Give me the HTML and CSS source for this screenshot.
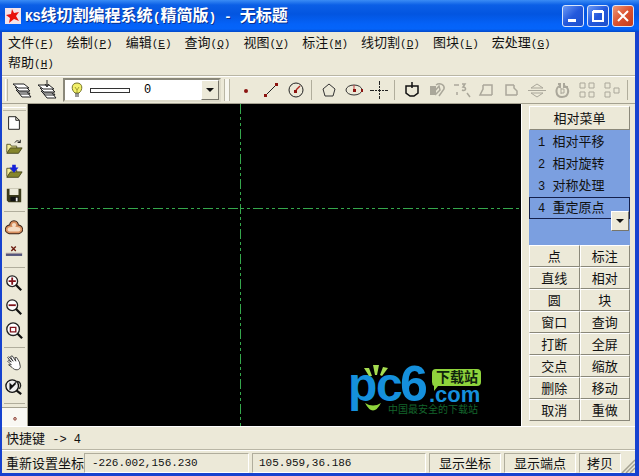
FILE: index.html
```
<!DOCTYPE html>
<html lang="zh">

<head>
    <meta charset="UTF-8">
    <meta name="viewport" content="width=device-width, initial-scale=1.0">
    <title>KS线切割编程系统(精简版) - 无标题</title>
    <link rel="stylesheet" href="styles.css">
</head>

<body>
    <div class="window">
        <!-- 标题栏 -->
        <header class="title-bar">
            <svg class="app-icon" viewBox="0 0 16 16">
                <rect width="16" height="16" fill="#f4e4ea" />
                <path d="M7 1l2 4 5-1-3 4 3 5-5-2-5 4 1-5-4-3 5-1z" fill="#e8120c" />
            </svg>
            <h1><span class="en">KS</span>线切割编程系统<span class="en">(</span>精简版<span class="en">) - </span>无标题</h1>
            <div class="window-buttons">
                <button class="window-button" aria-label="最小化">
                    <svg viewBox="0 0 20 20"><path d="M5 13h8v3H5z" fill="#fff" /></svg>
                </button>
                <button class="window-button" aria-label="最大化">
                    <svg viewBox="0 0 20 20"><path d="M5 6h10v9H5zM5 5h10" fill="none" stroke="#fff" stroke-width="2" /></svg>
                </button>
                <button class="window-button close" aria-label="关闭">
                    <svg viewBox="0 0 20 20"><path d="M5 5l10 10M15 5L5 15" stroke="#fff" stroke-width="2" /></svg>
                </button>
            </div>
        </header>

        <!-- 菜单 -->
        <nav class="menu-bar">
            <button>文件<span class="key">(<u>F</u>)</span></button>
            <button>绘制<span class="key">(<u>P</u>)</span></button>
            <button>编辑<span class="key">(<u>E</u>)</span></button>
            <button>查询<span class="key">(<u>Q</u>)</span></button>
            <button>视图<span class="key">(<u>V</u>)</span></button>
            <button>标注<span class="key">(<u>M</u>)</span></button>
            <button>线切割<span class="key">(<u>D</u>)</span></button>
            <button>图块<span class="key">(<u>L</u>)</span></button>
            <button>宏处理<span class="key">(<u>G</u>)</span></button>
            <button>帮助<span class="key">(<u>H</u>)</span></button>
        </nav>

        <!-- 工具栏 -->
        <div class="toolbar">
            <span class="grip"></span>
            <button class="tool" aria-label="图层">
                <svg viewBox="0 0 20 20" fill="#fff" stroke="#222">
                    <path d="M6 12h9l4 5h-9zM4 10h11l3 4H8z" /><path d="M3 7h11l4 4H7z" /><path d="M1 4h11l5 4H6z" />
                </svg>
            </button>
            <button class="tool" aria-label="当前图层">
                <svg viewBox="0 0 20 20" fill="#fff" stroke="#222">
                    <path d="M6 13h9l4 5h-9zM4 11h11l3 4H8z" /><path d="M3 8h11l4 4H7z" /><path d="M1 5h11l5 4H6z" />
                    <path d="M10 0v6M8 4l2 3 2-3" fill="none" />
                </svg>
            </button>
            <div class="layer-box">
                <svg class="bulb" viewBox="0 0 12 16">
                    <path d="M4 11C0 8 0 1 6 1s6 7 2 10z" fill="#f2f06a" stroke="#74742a" />
                    <path d="M4 12h4M4 14h4" stroke="#333" /><path d="M4 5l2 3 2-3M6 8v3" fill="none" stroke="#a0a030" />
                </svg>
                <span class="line-sample"></span>
                <select aria-label="图层选择">
                    <option>0</option>
                </select>
                <span class="arrow-box"></span>
            </div>
            <span class="grip double"></span>
            <button class="tool" aria-label="点">
                <svg viewBox="0 0 20 20"><circle cx="10" cy="11" r="2" fill="#8c1410" /></svg>
            </button>
            <button class="tool" aria-label="直线">
                <svg viewBox="0 0 20 20"><path d="M4 16L16 4" stroke="#222" /><path d="M3 14h3v3H3zM14 3h3v3h-3z" fill="#8c1410" /></svg>
            </button>
            <button class="tool" aria-label="圆">
                <svg viewBox="0 0 20 20"><circle cx="10" cy="10" r="7" fill="none" stroke="#222" /><path d="M10 10l4-4" stroke="#b02820" stroke-width="1.500" /><path d="M8 10h3v3H8z" fill="#8c1410" /></svg>
            </button>
            <span class="separator"></span>
            <button class="tool" aria-label="多边形">
                <svg viewBox="0 0 20 20"><path d="M10 4l6 5-2 7H6L4 9z" fill="none" stroke="#333" /></svg>
            </button>
            <button class="tool" aria-label="椭圆">
                <svg viewBox="0 0 20 20"><ellipse cx="10" cy="10" rx="8" ry="5" fill="none" stroke="#333" /><path d="M10 10V5" stroke="#c04040" /><path d="M9 9h3v3H9zM17 9h2v3h-2z" fill="#8c1410" /></svg>
            </button>
            <button class="tool" aria-label="辅助线">
                <svg viewBox="0 0 20 20"><path d="M1 10.500h18M10.500 1v18" stroke="#222" stroke-dasharray="4 1 2 1 3 1 2 1" /></svg>
            </button>
            <span class="separator"></span>
            <button class="tool" aria-label="轮廓">
                <svg viewBox="0 0 20 20"><path d="M10 6H4v7l4 3h4l4-3V6h-6M10 2v6" fill="none" stroke="#111" stroke-width="1.500" /></svg>
            </button>
            <button class="tool" aria-label="复制" disabled>
                <svg viewBox="0 0 20 20"><path d="M3 6h6v9H3z" fill="#aaa79a" /><path d="M7 12l5-6 1 4-5 5M9 5c4-3 9 0 8 4l-5 7" fill="none" stroke="#aaa79a" stroke-width="1.500" /></svg>
            </button>
            <button class="tool" aria-label="排序" disabled>
                <svg viewBox="0 0 20 20"><path d="M2 5h5M5 15v-3M15 13l3 4M10 4h3l-2 3c4 0 3 5-1 3" fill="none" stroke="#aaa79a" stroke-width="1.500" /></svg>
            </button>
            <button class="tool" aria-label="左轮廓" disabled>
                <svg viewBox="0 0 20 20"><path d="M6 5h9v10M6 5v4l-3 6h12" fill="none" stroke="#aaa79a" stroke-width="1.500" /></svg>
            </button>
            <button class="tool" aria-label="右轮廓" disabled>
                <svg viewBox="0 0 20 20"><path d="M12 5H4v10h11M12 5v3l3 3v4" fill="none" stroke="#aaa79a" stroke-width="1.500" /></svg>
            </button>
            <button class="tool" aria-label="镜像" disabled>
                <svg viewBox="0 0 20 20"><path d="M4 8l6-4 6 4zM4 13l6 4 6-4zM1 10.500h18" fill="none" stroke="#aaa79a" /></svg>
            </button>
            <button class="tool" aria-label="旋转" disabled>
                <svg viewBox="0 0 20 20"><path d="M8 6C3 7 3 17 10 17s8-8 3-11M8 3v5M12 3v4h4M6 4h3" fill="none" stroke="#aaa79a" stroke-width="2" /><path d="M9 8v6M9 9h3v4H9" fill="none" stroke="#aaa79a" /></svg>
            </button>
            <button class="tool" aria-label="阵列" disabled>
                <svg viewBox="0 0 20 20"><path d="M3 3h5v5H3zM12 3h5v5h-5zM3 12h5v5H3zM12 12h5v5h-5z" fill="none" stroke="#aaa79a" /></svg>
            </button>
            <button class="tool" aria-label="对齐" disabled>
                <svg viewBox="0 0 20 20"><path d="M3 3h5v5H3zM12 8h5v5h-5zM3 12h5v5H3z" fill="none" stroke="#aaa79a" /></svg>
            </button>
            <span class="separator"></span>
        </div>

        <main class="workspace">
            <div class="side-tools">
                <span class="side-grip"></span>
                <button class="tool" aria-label="新建">
                    <svg viewBox="0 0 20 20"><path d="M4 3h8l4 4v10H4zM12 3v4h4" fill="#fff" stroke="#111" /></svg>
                </button>
                <button class="tool" aria-label="打开">
                    <svg viewBox="0 0 20 20"><path d="M2 16V7h4l1 2h6v3" fill="#f3ec96" stroke="#55552a" /><path d="M2 17l4-6h13l-4 6z" fill="#85852c" stroke="#44441c" /><path d="M11 5c2-3 4-2 6 0M14 5h3V2" fill="none" stroke="#111" /></svg>
                </button>
                <button class="tool" aria-label="导入">
                    <svg viewBox="0 0 20 20"><path d="M2 16V7h4l1 2h6v3" fill="#f3ec96" stroke="#55552a" /><path d="M2 17l4-6h13l-4 6z" fill="#85852c" stroke="#44441c" /><path d="M8 3h4v3h3l-5 6-5-6h3z" fill="#1420d8" /></svg>
                </button>
                <button class="tool" aria-label="保存">
                    <svg viewBox="0 0 20 20"><path d="M2 3h16v15H4l-2-2z" fill="#3c3c1c" /><path d="M5 3h10v7H5z" fill="#eceada" /><path d="M6 12h9v5H6z" fill="#111" /><path d="M12 13h2v4h-2z" fill="#eee" /></svg>
                </button>
                <span class="side-separator"></span>
                <button class="tool" aria-label="加工轨迹">
                    <svg viewBox="0 0 20 20"><path d="M7 9c-2-6 8-6 6 0 6 0 7 6 2 7H5c-5-1-4-7 2-7z" fill="none" stroke="#3c2418" stroke-width="4" /><path d="M7 9c-2-6 8-6 6 0 6 0 7 6 2 7H5c-5-1-4-7 2-7z" fill="#f4dcc4" stroke="#d89060" stroke-width="2" /></svg>
                </button>
                <button class="tool" aria-label="清除轨迹">
                    <svg viewBox="0 0 20 20"><path d="M7 5l5 5M12 5l-5 5" stroke="#6c1c10" stroke-width="1.500" /><path d="M1 14h18" stroke="#55557c" stroke-width="3" /><path d="M1 12.500h18" stroke="#b0a0a0" /></svg>
                </button>
                <span class="side-separator"></span>
                <button class="tool" aria-label="放大">
                    <svg viewBox="0 0 20 20"><circle cx="8" cy="8" r="6" fill="#fff" stroke="#222" stroke-width="1.500" /><path d="M12 12l6 6" stroke="#111" stroke-width="2.500" /><path d="M4 8h8M8 4v8" stroke="#80141c" stroke-width="2" /></svg>
                </button>
                <button class="tool" aria-label="缩小">
                    <svg viewBox="0 0 20 20"><circle cx="8" cy="8" r="6" fill="#fff" stroke="#222" stroke-width="1.500" /><path d="M12 12l6 6" stroke="#111" stroke-width="2.500" /><path d="M4 8h8" stroke="#80141c" stroke-width="2" /></svg>
                </button>
                <button class="tool" aria-label="窗口缩放">
                    <svg viewBox="0 0 20 20"><circle cx="9" cy="8" r="7" fill="#fff" stroke="#222" stroke-width="1.500" /><path d="M14 13l5 5" stroke="#111" stroke-width="2.500" /><path d="M6 6h6v5H6z" fill="none" stroke="#80141c" stroke-width="1.500" /></svg>
                </button>
                <span class="side-separator"></span>
                <button class="tool" aria-label="平移">
                    <svg viewBox="0 0 20 20"><path d="M7 12L3 8l1-1 3 2-4-5 1-1 5 5-3-5 2-1 4 6-1-4 2 0 3 5 1 5c0 4-6 5-9 1l-4-3z" fill="#fff" stroke="#333" /></svg>
                </button>
                <button class="tool" aria-label="全图">
                    <svg viewBox="0 0 20 20"><circle cx="8" cy="9" r="7" fill="#eee" stroke="#111" stroke-width="1.500" /><path d="M13 14l5 4" stroke="#111" stroke-width="2.500" /><path d="M5 5v9l7-7V4L8 8z" fill="#111" /><path d="M12 4c5-1 7 4 4 8" fill="none" stroke="#222" stroke-width="1.500" /></svg>
                </button>
                <span class="side-separator"></span>
                <button class="tool pressed" aria-label="捕捉点">
                    <svg viewBox="0 0 20 20"><circle cx="10" cy="12" r="1.500" fill="#d8b0a8" stroke="#8c4438" /></svg>
                </button>
            </div>

            <!-- 绘图区 -->
            <div class="drawing">
                <svg class="axes">
                    <line x1="0" y1="32.500%" x2="100%" y2="32.500%" />
                    <line x1="43.100%" y1="0" x2="43.100%" y2="100%" />
                </svg>
                <svg class="watermark" viewBox="0 0 140 60" role="img" aria-label="pc6下载站">
                    <g class="brand">
                        <text x="-1" y="41" font-size="48">p</text>
                        <text x="27" y="41" font-size="48">c</text>
                        <text x="51" y="41" font-size="50">6</text>
                        <text x="80" y="42" font-size="22">.com</text>
                    </g>
                    <path d="M15 8l5 0 3 8-3 0zM24 5h6l-2 10h-2zM34 7l5 1-6 8-2-1z" fill="#a5dc50" />
                    <path d="M16 43q8 5 16 0q-8 15-16 0z" fill="#8fd43c" />
                    <path d="M87 9h41q4 0 4 4v9q0 4-4 4H89l-4 5v-5q-2-1-2-4v-9q0-4 4-4z" fill="#8fd43c" />
                    <text class="bubble-text" x="87" y="22">下载站</text>
                    <text class="slogan" x="39" y="53">中国最安全的下载站</text>
                </svg>
            </div>

            <aside class="side-menu">
                <button class="menu-title">相对菜单</button>
                <div class="menu-list">
                    <button><span class="en">1 </span>相对平移</button>
                    <button><span class="en">2 </span>相对旋转</button>
                    <button><span class="en">3 </span>对称处理</button>
                    <button class="active"><span class="en">4 </span>重定原点</button>
                    <button class="arrow-box more" aria-label="更多"></button>
                </div>
                <div class="command-grid">
                    <button>点</button><button>标注</button>
                    <button>直线</button><button>相对</button>
                    <button>圆</button><button>块</button>
                    <button>窗口</button><button>查询</button>
                    <button>打断</button><button>全屏</button>
                    <button>交点</button><button>缩放</button>
                    <button>删除</button><button>移动</button>
                    <button>取消</button><button>重做</button>
                </div>
            </aside>
        </main>

        <div class="command-line">快捷键<span class="en"> -&gt; 4</span></div>

        <!-- 状态栏 -->
        <footer class="status-bar">
            <span class="status-label">重新设置坐标</span>
            <span class="status-cell position en">-226.002,156.230</span>
            <span class="status-cell wide en">105.959,36.186</span>
            <span class="status-cell">显示坐标</span>
            <span class="status-cell">显示端点</span>
            <span class="status-cell small">拷贝</span>
            <svg class="resize" viewBox="0 0 14 14"><path d="M1 14L14 1M5 14l9-9M9 14l5-5" stroke="#a5a291" stroke-width="1.500" /></svg>
        </footer>
    </div>
</body>

</html>
```

FILE: styles.css
```
* {
    margin: 0;
    padding: 0;
    box-sizing: border-box;
}

body {
    font-family: 'Noto Sans CJK SC', sans-serif;
    font-size: 13px;
    line-height: 20px;
    color: #111;
    background: #ece9d8;
}

button {
    font: inherit;
    color: inherit;
    background: none;
    border: none;
}

.en,
.key {
    font-family: 'Liberation Mono', monospace;
    font-size: 11px;
    white-space: pre;
}

.window {
    min-height: 100vh;
    display: flex;
    flex-direction: column;
    background: #ece9d8;
    border: solid #1642cf;
    border-width: 0 4px 3px 2px;
}

/* 标题栏 */
.title-bar {
    height: 32px;
    margin: 0 -4px 0 -2px;
    padding: 0 5px;
    display: flex;
    align-items: center;
    background: linear-gradient(#3a8cf5 0, #0b5fe6 5px, #0355e0 14px, #0462f8 24px, #0464fa 29px, #0348c8);
}

.app-icon {
    width: 16px;
    height: 16px;
    margin-right: 4px;
}

.title-bar h1 {
    flex: 1;
    font-size: 16px;
    line-height: 24px;
    color: #fff;
    text-shadow: 1px 1px #0a3190;
    white-space: nowrap;
}

.title-bar .en {
    font-size: 13px;
}

.window-buttons {
    display: flex;
    gap: 3px;
}

.window-button {
    width: 22px;
    height: 22px;
    border: 1px solid #d9e6fb;
    border-radius: 3px;
    background: linear-gradient(135deg, #6c9af5, #2358dc 50%, #1c50cc);
}

.window-button svg {
    display: block;
    width: 20px;
    height: 20px;
}

.window-button.close {
    background: linear-gradient(135deg, #ee9878, #dc5230 50%, #c43c1c);
}

/* 菜单 */
.menu-bar {
    display: flex;
    flex-wrap: wrap;
    column-gap: 13px;
    padding: 0 40px 3px 6px;
    border-bottom: 1px solid #b9b6a5;
}

.menu-bar button {
    height: 20px;
    white-space: nowrap;
}

/* 工具栏 */
.toolbar {
    height: 28px;
    display: flex;
    align-items: center;
    border-top: 1px solid #fff;
    border-bottom: 1px solid #a5a291;
}

.grip {
    width: 3px;
    height: 22px;
    margin: 0 1px 0 3px;
    border-left: 1px solid #fff;
    border-right: 1px solid #b9b6a5;
}

.grip.double {
    width: 6px;
    margin: 0 3px;
    border-left-color: #b9b6a5;
    background: #f8f7f0;
}

.tool {
    flex: none;
    width: 25px;
    height: 24px;
    display: flex;
    align-items: center;
    justify-content: center;
}

.tool svg {
    flex: none;
    width: 20px;
    height: 20px;
}

.separator {
    width: 1px;
    height: 20px;
    margin: 0 4px 0 3px;
    background: #b0ad9c;
}

.layer-box {
    width: 158px;
    height: 24px;
    margin-left: 4px;
    padding-left: 6px;
    display: flex;
    align-items: center;
    background: #fff;
    border: 2px solid;
    border-color: #8a887a #dedbca #dedbca #8a887a;
}

.bulb {
    width: 12px;
    height: 16px;
}

.line-sample {
    width: 40px;
    height: 5px;
    margin: 0 14px 0 7px;
    border: 1px solid #333;
}

.layer-box select {
    flex: 1;
    min-width: 0;
    appearance: none;
    border: none;
    background: #fff;
    font: 12px 'Liberation Mono', monospace;
}

.arrow-box {
    width: 18px;
    height: 20px;
    display: flex;
    align-items: center;
    justify-content: center;
    background: #ece9d8;
    border: 1px solid;
    border-color: #fff #77756a #77756a #fff;
}

.arrow-box::after {
    content: '';
    border: 4px solid transparent;
    border-top-color: #111;
    border-bottom: none;
}

/* 工作区 */
.workspace {
    flex: 1;
    display: grid;
    grid-template-columns: 26px 1fr 114px;
}

.side-tools {
    display: flex;
    flex-direction: column;
    border-right: 1px solid #a5a291;
}

.side-tools .tool {
    width: 23px;
}

.side-tools .tool svg {
    width: 18px;
    height: 18px;
}

.side-grip {
    height: 4px;
    margin: 3px 1px 0;
    border-top: 1px solid #fff;
    border-bottom: 1px solid #b9b6a5;
}

.side-separator {
    height: 1px;
    margin: 4px 2px 3px;
    background: #b0ad9c;
}

.side-tools .pressed {
    flex: 1;
    width: 25px;
    min-height: 0;
    background: #f9f8f3;
    border-top: 1px solid #a5a291;
}

.drawing {
    position: relative;
    background: #000;
}

.axes {
    position: absolute;
    width: 100%;
    height: 100%;
    stroke: #35a84c;
    stroke-width: 1;
    stroke-dasharray: 10 3 3 3 3 3;
    shape-rendering: crispEdges;
}

.watermark {
    position: absolute;
    right: 32px;
    bottom: 6px;
    width: 140px;
    height: 60px;
    overflow: visible;
}

.brand {
    font-family: 'Liberation Sans', sans-serif;
    font-weight: bold;
    fill: #1590dc;
}

.bubble-text {
    font-size: 14px;
    font-weight: bold;
    fill: #10240c;
}

.slogan {
    font-size: 10px;
    fill: #14652c;
}

/* 右侧菜单 */
.side-menu {
    display: flex;
    flex-direction: column;
    padding: 2px 5px 5px 7px;
    border-left: 1px solid #fff;
}

.menu-title,
.command-grid button {
    background: #ece9d8;
    border: 1px solid;
    border-color: #fff #8a887a #8a887a #fff;
}

.menu-title {
    height: 24px;
}

.menu-list {
    position: relative;
    flex: 1;
    min-height: 114px;
    padding-top: 1px;
    display: flex;
    flex-direction: column;
    background: #7b9fe0;
}

.menu-list button:not(.more) {
    height: 22px;
    padding-left: 8px;
    text-align: left;
    line-height: 18px;
    border: 1px solid transparent;
}

.menu-list .active:not(.more) {
    border-color: #14204c;
}

.menu-list .en,
.command-line .en {
    font-size: 12px;
}

.more {
    position: absolute;
    right: 1px;
    bottom: 14px;
}

.command-grid {
    display: grid;
    grid-template-columns: 1fr 1fr;
    grid-auto-rows: 22px;
}

/* 底部 */
.command-line {
    height: 24px;
    padding: 1px 4px;
    border-top: 1px solid #fff;
    border-bottom: 1px solid #b9b6a5;
}

.status-bar {
    height: 23px;
    padding: 2px 0 0 4px;
    display: flex;
    gap: 3px;
    border-top: 1px solid #fff;
    white-space: nowrap;
}

.status-label {
    margin-right: -3px;
}

.status-cell {
    width: 72px;
    text-align: center;
    line-height: 18px;
    border: 1px solid;
    border-color: #b0ad9c #fff #fff #b0ad9c;
}

.status-cell.position {
    width: 165px;
    padding-left: 7px;
    text-align: left;
}

.status-cell.wide {
    flex: 1;
    padding-left: 6px;
    text-align: left;
}

.status-cell.small {
    width: 42px;
}

.resize {
    align-self: flex-end;
    width: 14px;
    height: 14px;
    margin-left: -3px;
}
```
